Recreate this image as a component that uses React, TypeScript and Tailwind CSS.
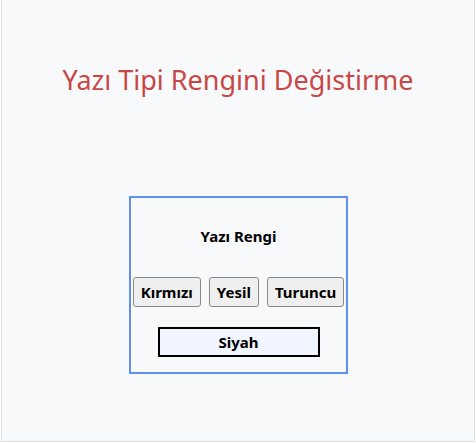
import React, { useState } from "react";

const colors = [
  { label: "Kırmızı", value: "#c0392b" },
  { label: "Yesil", value: "#2e7d32" },
  { label: "Turuncu", value: "#e67e22" },
];

const App = () => {
  const [textColor, setTextColor] = useState("#000000");

  return (
    <div className="ml-px w-[474px] h-[442px] border-x border-b border-[#dcdfe4] bg-[#f8f9fb] font-['Noto_Sans',sans-serif]">
      <h1 className="pt-[60px] text-center text-[27px] leading-[40px] text-[#c74846]">
        Yazı Tipi Rengini Değistirme
      </h1>
      <div className="mt-[96px] ml-[127px] w-[219px] h-[178px] border-2 border-[#5f8ff5] flex flex-col items-center">
        <h2
          className="mt-[27px] text-[15px] leading-[22px] font-bold"
          style={{ color: textColor }}
        >
          Yazı Rengi
        </h2>
        <div className="mt-[30px] flex gap-2">
          {colors.map((c) => (
            <button
              key={c.label}
              className="h-[30px] px-[7px] text-[15px] font-bold text-black bg-[#efefef] border border-[#8a8a8a] rounded-[3px]"
              onClick={() => setTextColor(c.value)}
            >
              {c.label}
            </button>
          ))}
        </div>
        <button
          className="mt-[20px] w-[162px] h-[30px] text-[15px] font-bold text-black bg-[#f0f5ff] border-2 border-black"
          onClick={() => setTextColor("#000000")}
        >
          Siyah
        </button>
      </div>
    </div>
  );
};

export default App;
